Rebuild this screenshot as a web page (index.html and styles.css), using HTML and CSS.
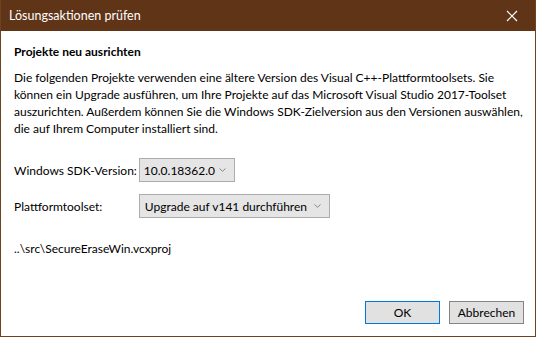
FILE: index.html
```html
<!DOCTYPE html>
<html lang="de">
<head>
    <meta charset="UTF-8">
    <meta name="viewport" content="width=device-width, initial-scale=1.0">
    <title>Lösungsaktionen prüfen</title>
    <link rel="stylesheet" href="styles.css">
</head>
<body>
    <div class="window">
        <div class="titlebar">
            <span class="title">Lösungsaktionen prüfen</span>
            <svg class="close" width="12" height="12" viewBox="0 0 12 12">
                <path d="M1 1 L11 11 M11 1 L1 11" stroke="#fff" stroke-width="1.2" fill="none"/>
            </svg>
        </div>
        <div class="content">
            <h2>Projekte neu ausrichten</h2>
            <p class="intro">Die folgenden Projekte verwenden eine ältere Version des Visual C++-Plattformtoolsets. Sie<br>können ein Upgrade ausführen, um Ihre Projekte auf das Microsoft Visual Studio 2017-Toolset<br>auszurichten. Außerdem können Sie die Windows SDK-Zielversion aus den Versionen auswählen,<br>die auf Ihrem Computer installiert sind.</p>

            <div class="form">
                <label>Windows SDK-Version:</label>
                <div class="select sdk">
                    <span>10.0.18362.0</span>
                    <svg width="7" height="4" viewBox="0 0 7 4"><path d="M0.5 0.5 L3.5 3.3 L6.5 0.5" stroke="#888" fill="none"/></svg>
                </div>
                <label>Plattformtoolset:</label>
                <div class="select toolset">
                    <span>Upgrade auf v141 durchführen</span>
                    <svg width="7" height="4" viewBox="0 0 7 4"><path d="M0.5 0.5 L3.5 3.3 L6.5 0.5" stroke="#888" fill="none"/></svg>
                </div>
            </div>

            <div class="project">..\src\SecureEraseWin.vcxproj</div>

            <div class="buttons">
                <button class="btn default">OK</button>
                <button class="btn">Abbrechen</button>
            </div>
        </div>
    </div>
</body>
</html>
```

FILE: styles.css
```css
html, body {
    margin: 0;
    height: 100%;
}

body {
    font-family: Lato, "Noto Sans", sans-serif;
    font-size: 12px;
    color: #000;
    background: #fff;
    white-space: nowrap;
}

.window {
    box-sizing: border-box;
    height: 337px;
    border: 1px solid #6b4222;
    border-top: none;
    display: flex;
    flex-direction: column;
    overflow: hidden;
}

.titlebar {
    height: 31px;
    background-color: #5f3417;
    color: #fff;
    display: flex;
    align-items: center;
    justify-content: space-between;
    padding: 0 17px 0 8px;
    flex-shrink: 0;
    font-size: 12.5px;
}

.content {
    flex: 1;
    display: flex;
    flex-direction: column;
    padding: 0 11px 12px 13px;
}

h2 {
    font-size: 12px;
    font-weight: bold;
    line-height: 16px;
    margin: 13px 0 0;
}

.intro {
    line-height: 17px;
    margin: 9px 0 0;
}

.form {
    display: grid;
    grid-template-columns: minmax(124px, max-content) max-content;
    row-gap: 12px;
    align-items: center;
    margin-top: 21px;
}

.form label {
    padding-right: 2px;
}

.select {
    box-sizing: border-box;
    height: 24px;
    background-color: #e5e5e5;
    border: 1px solid #acacac;
    display: flex;
    align-items: center;
    justify-content: space-between;
    padding: 0 8px 0 5px;
}

.select.sdk {
    width: 96px;
    padding-left: 4px;
}

.select.toolset {
    width: 191px;
}

.project {
    line-height: 16px;
    margin-top: 23px;
}

.buttons {
    margin-top: auto;
    display: flex;
    justify-content: flex-end;
    gap: 9px;
}

.btn {
    box-sizing: border-box;
    width: 75px;
    height: 23px;
    font-family: inherit;
    font-size: 12px;
    background-color: #e1e1e1;
    border: 1px solid #858585;
    padding: 0;
}

.btn.default {
    border-color: #0078d7;
}
```
